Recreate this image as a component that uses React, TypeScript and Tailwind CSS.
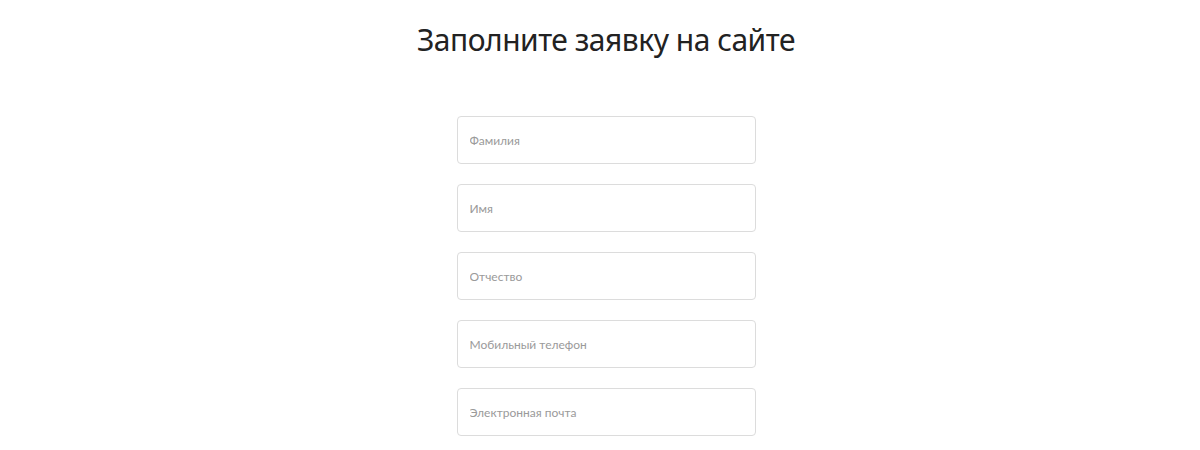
export default function App() {
  const fields = ['Фамилия', 'Имя', 'Отчество', 'Мобильный телефон', 'Электронная почта'];

  return (
    <div className="flex h-[450px] w-full flex-col items-center bg-white pl-[12px]">
      <h1
        className="mt-[20px] text-[30px] leading-[40px] tracking-[-0.5px] text-[#222222]"
        style={{ fontFamily: '"Noto Sans", "Open Sans", sans-serif' }}
      >
        Заполните заявку на сайте
      </h1>
      <form className="mt-[56px] flex w-[299px] flex-col gap-[20px]">
        {fields.map((f) => (
          <input
            key={f}
            type="text"
            placeholder={f}
            className="h-[48px] w-full rounded-[4px] border border-[#dcdcdc] bg-white px-[12px] text-[12px] text-[#333] outline-none placeholder:text-[#9a9a9a]"
            style={{ fontFamily: 'Lato, "Open Sans", sans-serif' }}
          />
        ))}
      </form>
    </div>
  );
}
